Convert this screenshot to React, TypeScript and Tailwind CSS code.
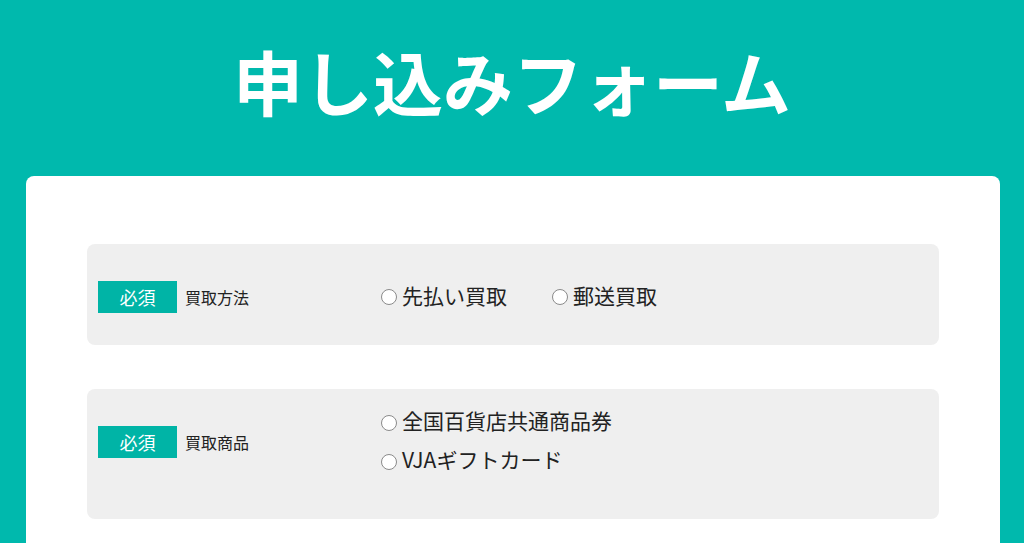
import React from 'react';

const fields = [
  { label: '買取方法', options: ['先払い買取', '郵送買取'], inline: true },
  { label: '買取商品', options: ['全国百貨店共通商品券', 'VJAギフトカード'], inline: false },
];

function Radio({ text }: { text: string }) {
  return (
    <label className="flex items-center gap-[5px] text-[21px] leading-none text-[#222]">
      <span className="w-[16px] h-[16px] rounded-full border border-[#8a8a8a] bg-white shrink-0" />
      <span className="pb-[4px]">{text}</span>
    </label>
  );
}

export default function App() {
  return (
    <div className="min-h-[543px] bg-[#00b9ad] font-['Noto_Sans_CJK_JP','Noto_Sans',sans-serif]">
      <header className="h-[176px] flex items-center justify-center pb-[14px]">
        <h1 className="text-[70px] font-bold text-white leading-none">申し込みフォーム</h1>
      </header>
      <main className="ml-[26px] mr-[24px] bg-white rounded-t-[8px] px-[61px] pt-[68px] pb-10 space-y-[44px]">
        {fields.map(f => (
          <div
            key={f.label}
            className={`flex items-center bg-[#efefef] rounded-[8px] pl-[11px] ${f.inline ? 'h-[101px] pt-[5px]' : 'h-[130px] pb-[24px]'}`}
          >
            <div className="w-[283px] flex items-center shrink-0">
              <span className="w-[79px] h-[32px] bg-[#00b4a6] text-white text-[18px] flex items-center justify-center">必須</span>
              <span className="ml-2 text-[16px] text-[#222]">{f.label}</span>
            </div>
            <div className={f.inline ? 'flex items-center gap-[45px]' : 'flex flex-col gap-[14px]'}>
              {f.options.map(o => <Radio key={o} text={o} />)}
            </div>
          </div>
        ))}
      </main>
    </div>
  );
}
